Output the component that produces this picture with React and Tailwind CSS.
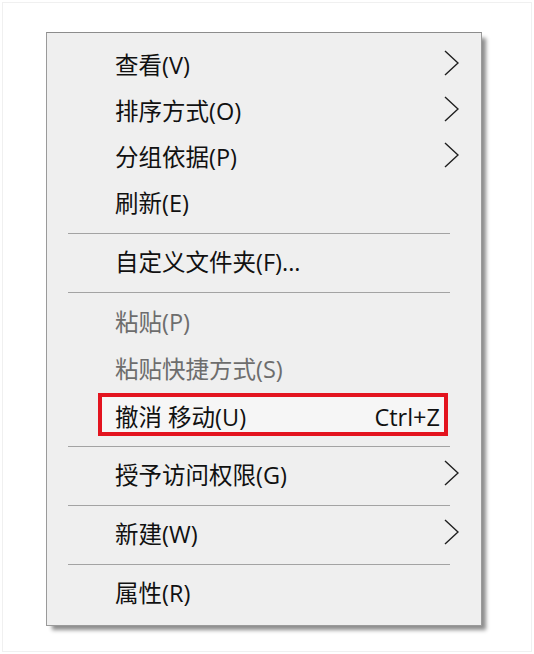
import React from "react";

const FONT = { fontFamily: '"Open Sans", "Noto Sans CJK SC", sans-serif' };

function Chevron() {
  return (
    <svg width="15" height="26" viewBox="0 0 15 26" className="mb-[7px] shrink-0">
      <polyline points="1,1 14,13 1,25" fill="none" stroke="#1f1f1f" strokeWidth="1.4" />
    </svg>
  );
}

function Item({ label, sub, disabled, tall }) {
  return (
    <div className={"flex items-center pl-[68px] pr-[22px] " + (tall ? "h-[47px]" : "h-[46px]")}>
      <span className={"flex-1 text-[23.5px] leading-none " + (disabled ? "text-[#6d6d6d]" : "text-[#111111]")}>
        {label}
      </span>
      {sub && <Chevron />}
    </div>
  );
}

function Sep() {
  return (
    <div className="flex h-[13px] items-center pl-[21px] pr-[31px]">
      <div className="h-px w-full bg-[#a3a3a3]" />
    </div>
  );
}

export default function App() {
  return (
    <div className="w-[534px] h-[654px] bg-white p-[2px]" style={FONT}>
      <div className="h-full w-full border border-[#f0f0f0] pt-[29px] pl-[43px]">
        <div className="w-[436px] border border-[#9a9a9a] border-t-[#8c8c8c] bg-[#efefef] pt-[10px] pb-[8px] shadow-[5px_5px_4px_-1px_rgba(0,0,0,0.45)]">
          <Item label="查看(V)" sub />
          <Item label="排序方式(O)" sub />
          <Item label="分组依据(P)" sub />
          <Item label="刷新(E)" />
          <Sep />
          <Item label="自定义文件夹(F)..." />
          <Sep />
          <Item label="粘贴(P)" disabled tall />
          <Item label="粘贴快捷方式(S)" disabled tall />
          <div className="h-[47px] pl-[51px] pr-[33px]">
            <div className="flex h-[43px] items-center border-4 border-[#e3141f] bg-[#f6f6f6] pl-[13px] pr-[4px] pt-[6px]">
              <span className="flex-1 text-[23.5px] leading-none text-[#111111]">撤消 移动(U)</span>
              <span className="text-[23.5px] leading-none text-[#111111]">Ctrl+Z</span>
            </div>
          </div>
          <Sep />
          <Item label="授予访问权限(G)" sub />
          <Sep />
          <Item label="新建(W)" sub />
          <Sep />
          <Item label="属性(R)" />
        </div>
      </div>
    </div>
  );
}
